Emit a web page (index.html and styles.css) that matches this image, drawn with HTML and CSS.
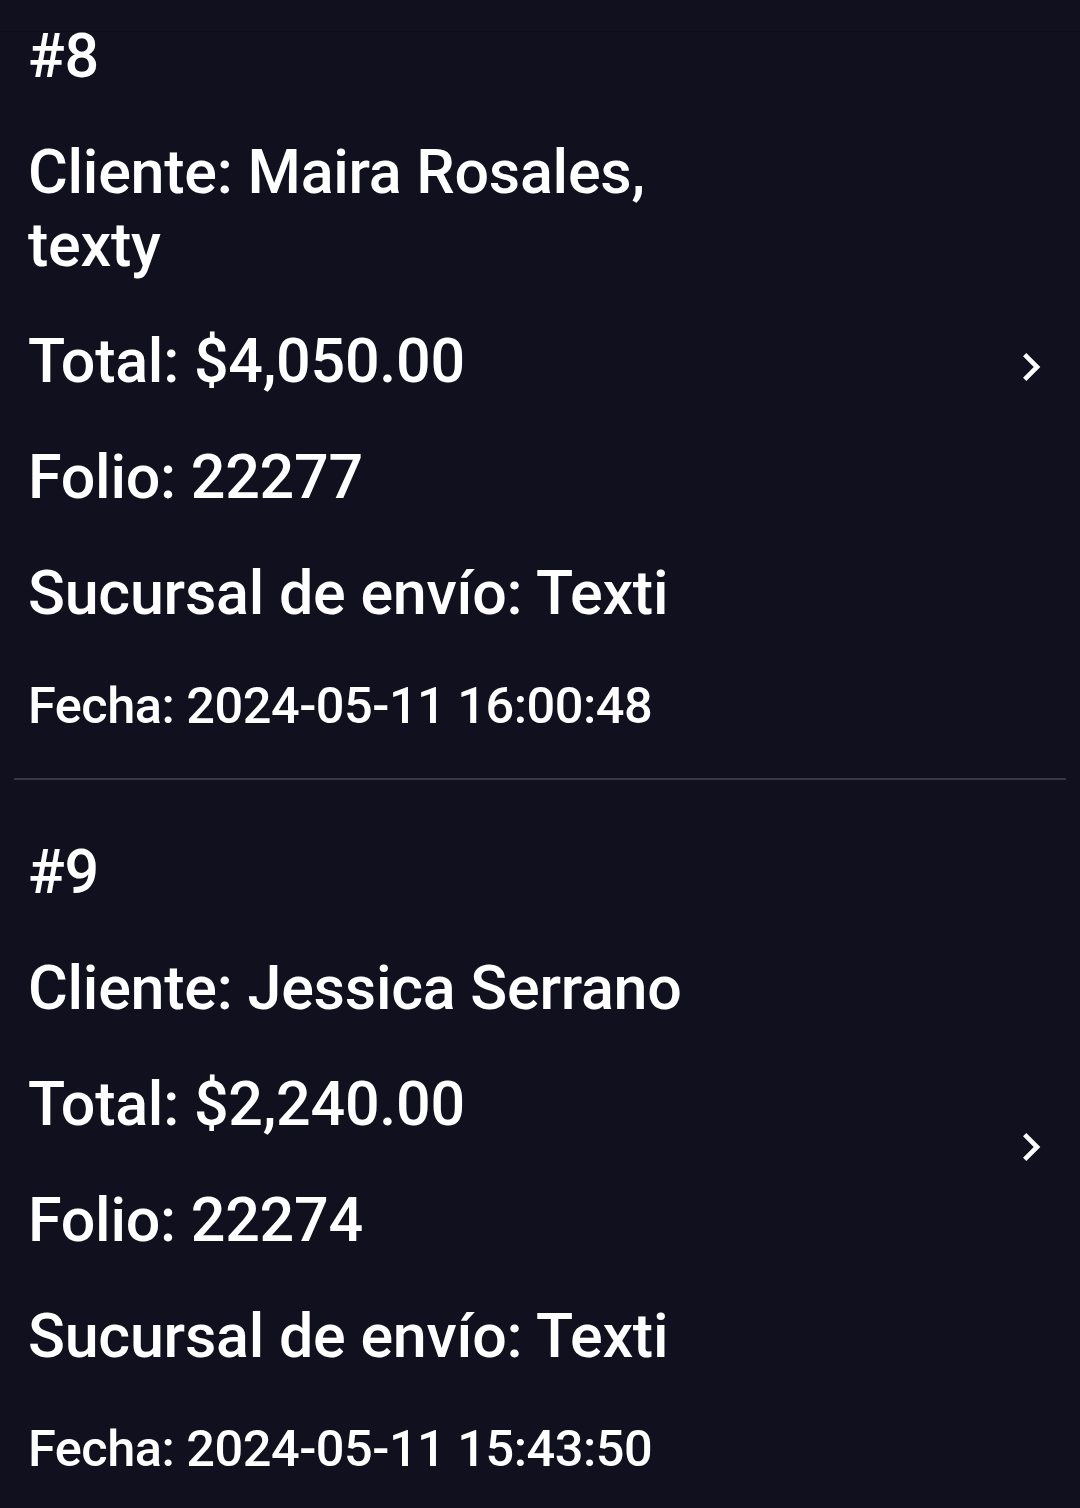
FILE: index.html
```html
<!DOCTYPE html>
<html lang="es">
<head>
<meta charset="utf-8">
<title>Pedidos</title>
<link rel="stylesheet" href="styles.css">
</head>
<body>
<div class="topbar"></div>
<main class="list">
  <article class="order">
    <div class="info">
      <p class="field">#8</p>
      <p class="field">Cliente: Maira Rosales, texty</p>
      <p class="field">Total: $4,050.00</p>
      <p class="field">Folio: 22277</p>
      <p class="field">Sucursal de envío: Texti</p>
      <p class="field date">Fecha: 2024-05-11 16:00:48</p>
    </div>
    <svg class="chevron" viewBox="0 0 24 24" width="56" height="56"><path d="M10 6L8.59 7.41 13.17 12l-4.58 4.59L10 18l6-6z" fill="#ffffff"/></svg>
  </article>
  <article class="order">
    <div class="info">
      <p class="field">#9</p>
      <p class="field">Cliente: Jessica Serrano</p>
      <p class="field">Total: $2,240.00</p>
      <p class="field">Folio: 22274</p>
      <p class="field">Sucursal de envío: Texti</p>
      <p class="field date">Fecha: 2024-05-11 15:43:50</p>
    </div>
    <svg class="chevron" viewBox="0 0 24 24" width="56" height="56"><path d="M10 6L8.59 7.41 13.17 12l-4.58 4.59L10 18l6-6z" fill="#ffffff"/></svg>
  </article>
</main>
</body>
</html>
```
FILE: styles.css
```css
html, body {
  margin: 0;
  padding: 0;
  background: #11101f;
  height: 100%;
  overflow: hidden;
}
body {
  position: relative;
  font-family: Roboto, "Noto Sans", sans-serif;
  color: #ffffff;
}
.topbar {
  position: absolute;
  left: 0;
  top: 0;
  right: 0;
  height: 31px;
  background: #11101f;
  border-bottom: 1px solid #0c0b17;
  z-index: 2;
}
.list {
  padding: 0 14px;
  margin-top: -36px;
}
.order {
  display: flex;
  align-items: center;
  justify-content: space-between;
  padding: 56px 0 40px 14px;
  border-bottom: 2px solid #383746;
}
.order:last-child {
  border-bottom: none;
}
.info {
  width: 700px;
}
.field {
  margin: 0 0 43px;
  font-size: 61px;
  font-weight: 500;
  line-height: 73px;
  letter-spacing: -0.25px;
}
.field.date {
  margin-bottom: 0;
  font-size: 50.5px;
  line-height: 65px;
  letter-spacing: -0.5px;
}
.chevron {
  flex: none;
  margin-right: 7px;
  margin-bottom: 24px;
}
```
